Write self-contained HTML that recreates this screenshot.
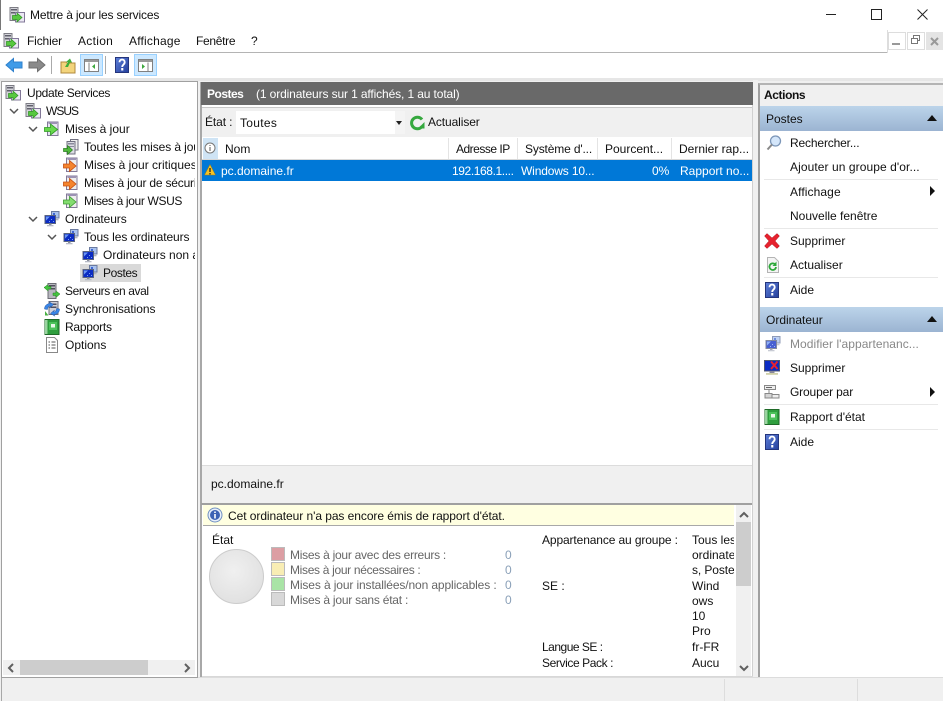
<!DOCTYPE html>
<html lang="fr"><head><meta charset="utf-8"><title>Mettre à jour les services</title>
<style>
html,body{margin:0;padding:0}
body{width:943px;height:701px;position:relative;overflow:hidden;background:#f0f0f0;font:12px/16px "Liberation Sans",sans-serif;color:#111}
.a{position:absolute}
.t{position:absolute;white-space:nowrap;line-height:16px;height:16px}
svg.i{position:absolute;width:16px;height:16px;overflow:visible}
.sep{position:absolute;left:764px;width:174px;height:1px;background:#e8e8e8}
.g{color:#666}
</style></head><body>
<svg width="0" height="0" style="position:absolute"><defs>
<linearGradient id="hb" x1="0" y1="0" x2="1" y2="1"><stop offset="0" stop-color="#5d7fd8"/><stop offset="1" stop-color="#243f9c"/></linearGradient>
<symbol id="srv" viewBox="0 0 16 16"><rect x="1" y="0.500" width="8" height="13" fill="#d4d4da" stroke="#7c7c84"/><rect x="2" y="2" width="6" height="1.500" fill="#60606c"/><rect x="2" y="5" width="6" height="1.500" fill="#60606c"/><rect x="6.500" y="5.500" width="9" height="9.500" fill="#ecE8f4" stroke="#827898"/><path d="M3.500 8.500h4.500V6l5 4.500-5 4.500v-2.500H3.500z" fill="#58c840" stroke="#2e9322" stroke-width=".7"/></symbol>
<symbol id="upg" viewBox="0 0 16 16"><path d="M3.500 1h10.500v13.500h-10.500z" fill="#e8e4f2" stroke="#827898"/><path d="M4.500 1h8.500v2h-8.500z" fill="#9c92b4"/><path d="M.5 6.500h6V3l7 5.500-7 5.500v-3.500h-6z" fill="#68d84e" stroke="#2f9a24" stroke-width=".8"/></symbol>
<symbol id="upa" viewBox="0 0 16 16"><path d="M7.500 .5h7.500v10.500h-7.500z" fill="#eee" stroke="#707080"/><path d="M4 2.500h8v12.500h-8z" fill="#dcdce4" stroke="#707080"/><path d="M5 4h6v1.500H5zM5 7h6v1H5z" fill="#8a8a9c"/><path d="M.5 9.500h4V6.500l5 4.500-5 4.500v-3h-4z" fill="#50b83c" stroke="#2a7f20" stroke-width=".7"/></symbol>
<symbol id="upr" viewBox="0 0 16 16"><path d="M3.500 1h10.500v13.500h-10.500z" fill="#eee" stroke="#827898"/><path d="M4.500 1h8.500v2h-8.500z" fill="#9c92b4"/><path d="M.5 7h6V3.500l6.500 5.500-6.500 5.500V11h-6z" fill="#f4842e" stroke="#c64e10" stroke-width=".8"/></symbol>
<symbol id="upw" viewBox="0 0 16 16"><path d="M3.500 1h10.500v13.500h-10.500z" fill="#eee" stroke="#827898"/><path d="M4.500 1h8.500v2h-8.500z" fill="#9c92b4"/><path d="M.5 7h6V3.500l6.500 5.500-6.500 5.500V11h-6z" fill="#84dc70" stroke="#3c9a30" stroke-width=".8"/></symbol>
<symbol id="pcs" viewBox="0 0 16 16"><rect x="7.500" y=".5" width="7.500" height="6.500" fill="#a9c2ee" stroke="#6a7aa0"/><rect x="9" y="2" width="2" height="2" fill="#3e66d4"/><rect x="8.500" y="8" width="6" height="1.300" fill="#b0b4c0"/><rect x="1" y="4.500" width="10.500" height="8" fill="#0b2cc4" stroke="#5a6480"/><path d="M2 5.500h4l-4 4z" fill="#6a96f2"/><path d="M7 8h1v1H7zM9 10h1v1H9zM5 10h1v1H5z" fill="#7aa0f0"/><rect x="5" y="12.500" width="2.500" height="1.500" fill="#8a8e9c"/><rect x="3" y="14" width="6.500" height="1.300" fill="#b6bac6"/></symbol>
<symbol id="down" viewBox="0 0 16 16"><rect x="4" y=".5" width="8" height="15" fill="#b8b8c0" stroke="#6c6c74"/><rect x="5" y="2" width="6" height="1.500" fill="#50505c"/><rect x="5" y="5" width="6" height="1.500" fill="#50505c"/><path d="M0 4.500 4 1.500v2h3v2.500H4v2zM16 11l-4-3v2H9v2.500h3v2z" fill="#44c440" stroke="#23801f" stroke-width=".5"/></symbol>
<symbol id="syn" viewBox="0 0 16 16"><rect x="5" y=".5" width="9" height="13" fill="#d0d0d8" stroke="#6c6c78"/><rect x="6.500" y="2.500" width="6" height="1.500" fill="#505060"/><rect x="6.500" y="5.500" width="6" height="1.500" fill="#505060"/><path d="M.5 8C.5 4.500 3 2.500 6.500 2.500L5 .8 9.500 3.500 5.500 7 6.500 5C4.500 5 3.500 6.500 3.500 8.500z" fill="#3a86e6" stroke="#1e55a8" stroke-width=".5"/><path d="M15.500 8c0 3.500-2.500 5.500-6 5.500L11 15.200 6.500 12.500l4-3.500-1 2c2 0 3-1.500 3-3.500z" fill="#3a86e6" stroke="#1e55a8" stroke-width=".5"/><path d="M1 10l3.500 4.500H1z" fill="#46b040"/></symbol>
<symbol id="rep" viewBox="0 0 16 16"><rect x="1" y=".5" width="14" height="15" fill="#2f9e3e" stroke="#1f6a28"/><rect x="1" y="1" width="2.500" height="14" fill="#9ad4a0"/><rect x="5" y="3" width="8" height="8" fill="#4cc25a"/><rect x="7" y="5" width="4" height="3.500" fill="#e8f8e8"/></symbol>
<symbol id="opt" viewBox="0 0 16 16"><path d="M2.500 .5h8l3 3v12h-11z" fill="#fff" stroke="#888"/><path d="M4.500 5H6M7.500 5h4M4.500 8H6M7.500 8h4M4.500 11H6M7.500 11h4" stroke="#555" fill="none"/></symbol>
<symbol id="help" viewBox="0 0 16 16"><rect x="1.500" y=".5" width="13" height="15" fill="url(#hb)" stroke="#24357c"/><path d="M5.500 5.200c0-3.500 5.200-3.500 5.200 0 0 2.400-2.500 2.300-2.500 4.800" fill="none" stroke="#fff" stroke-width="1.900"/><rect x="7.200" y="11" width="2.100" height="2.500" fill="#fff"/></symbol>
<symbol id="redx" viewBox="0 0 16 16"><path d="M.5 3 3 .5 8 5 13 .5 15.500 3 11 8l4.500 5-2.500 2.500L8 11l-5 4.500L.5 13 5 8z" fill="#e6222e" stroke="#b01c28" stroke-width=".5"/></symbol>
<symbol id="ref" viewBox="0 0 16 16"><path d="M2.500 .5h7l4 4v11h-11z" fill="#f4f4f4" stroke="#b4b4b4"/><path d="M11 10a3.300 3.300 0 1 1-1-2.700" fill="none" stroke="#2ea83a" stroke-width="1.800"/><path d="M11.500 4.500v4.500H7.500z" fill="#2ea83a"/></symbol>
<symbol id="find" viewBox="0 0 16 16"><circle cx="9.500" cy="6" r="5" fill="#d4e6fa" stroke="#7c96b8" stroke-width="1.300"/><path d="M6 9.500 1.500 14.500" stroke="#888" stroke-width="2"/></symbol>
<symbol id="pcx" viewBox="0 0 16 16"><rect x=".5" y=".5" width="15" height="10.500" fill="#0b2cc4" stroke="#505870"/><rect x="5.500" y="11" width="5" height="2" fill="#889"/><rect x="2" y="13" width="12" height="1.800" fill="#d0d0a8"/><path d="M7 1.500l6.500 7.500M13.500 1.500 7 9" stroke="#e8222e" stroke-width="2"/></symbol>
<symbol id="grp" viewBox="0 0 16 16"><rect x=".5" y="1.500" width="11" height="4" fill="#eee" stroke="#888"/><path d="M2 3.500h6" stroke="#666"/><path d="M5 5.500v4" stroke="#888"/><rect x="1" y="9.500" width="7" height="4.500" fill="#d4d4d4" stroke="#888"/><rect x="8" y="10.500" width="7" height="3.500" fill="#eee" stroke="#888"/></symbol>
</defs></svg>

<!-- title -->
<div class="a" style="left:0;top:0;width:943px;height:78px;background:#fff"></div>
<div class="a" style="left:0;top:0;width:1px;height:30px;background:#777"></div>
<svg class="i" style="left:9px;top:7px"><use href="#srv"/></svg>
<div class="t" style="left:30px;top:7px;letter-spacing:-.16px">Mettre à jour les services</div>
<div class="a" style="left:826px;top:14px;width:10px;height:1px;background:#222"></div>
<div class="a" style="left:871px;top:9px;width:9px;height:9px;border:1px solid #222"></div>
<svg class="a" style="left:917px;top:9px" width="11" height="11"><path d="M.5.500l10 10M10.500.500l-10 10" stroke="#222" fill="none"/></svg>

<!-- menu -->
<svg class="i" style="left:3px;top:33px"><use href="#srv"/></svg>
<div class="t" style="left:27px;top:33px;letter-spacing:-.15px">Fichier</div>
<div class="t" style="left:78px;top:33px;letter-spacing:.3px">Action</div>
<div class="t" style="left:129px;top:33px;letter-spacing:.2px">Affichage</div>
<div class="t" style="left:196px;top:33px;letter-spacing:-.3px">Fenêtre</div>
<div class="t" style="left:251px;top:33px">?</div>
<div class="a" style="left:0;top:52px;width:887px;height:1px;background:#b4b4b4"></div>
<div class="a" style="left:887px;top:30px;width:1px;height:23px;background:#ddd"></div>
<div class="a" style="left:888px;top:32px;width:16px;height:16px;border:1px solid #ddd;background:#fff"></div>
<div class="a" style="left:907px;top:32px;width:16px;height:16px;border:1px solid #ddd;background:#fff"></div>
<div class="a" style="left:926px;top:32px;width:17px;height:18px;background:#e4e4e4"></div>
<div class="a" style="left:892px;top:43px;width:8px;height:2px;background:#999"></div>
<svg class="a" style="left:911px;top:35px" width="10" height="10"><path d="M2.500 3V.5h6v5H6.500M.5 3.500h6v5h-6z" fill="none" stroke="#777"/></svg>
<svg class="a" style="left:930px;top:37px" width="9" height="9"><path d="M1 1l7 7M8 1 1 8" stroke="#999" stroke-width="2"/></svg>

<!-- toolbar -->
<svg class="a" style="left:5px;top:57px" width="18" height="16"><path d="M1 8 8.500 1.500V5H17v6H8.500v3.500z" fill="#3f9be8" stroke="#2f80cc"/></svg>
<svg class="a" style="left:28px;top:57px" width="18" height="16"><path d="M17 8 9.500 1.500V5H1v6h8.500v3.500z" fill="#8a8a8a" stroke="#707070"/></svg>
<div class="a" style="left:51px;top:56px;width:1px;height:18px;background:#aaa"></div>
<svg class="i" style="left:60px;top:58px"><path d="M1 4h5l1 1h8v10H1z" fill="#f3d47c" stroke="#b08a3c"/><path d="M5 9 8 4H6l4-3.500L12 4.500h-2L8 9z" fill="#3eae3a"/></svg>
<div class="a" style="left:80px;top:54px;width:21px;height:20px;background:#cce8ff;border:1px solid #99d1ff"></div>
<svg class="a" style="left:84px;top:59px" width="16" height="14"><rect x=".5" y=".5" width="14" height="12" fill="#fff" stroke="#808080"/><rect x="1" y="1" width="13" height="2" fill="#999"/><path d="M5 3.500v9" stroke="#808080"/><path d="M11 5v5L8 7.500z" fill="#3da83d"/></svg>
<div class="a" style="left:105px;top:56px;width:1px;height:18px;background:#aaa"></div>
<svg class="i" style="left:114px;top:57px"><use href="#help"/></svg>
<div class="a" style="left:134px;top:54px;width:21px;height:20px;background:#cce8ff;border:1px solid #99d1ff"></div>
<svg class="a" style="left:138px;top:59px" width="16" height="14"><rect x=".5" y=".5" width="14" height="12" fill="#fff" stroke="#808080"/><rect x="1" y="1" width="13" height="2" fill="#999"/><path d="M10 3.500v9" stroke="#808080"/><path d="M4 5v5l3-2.500z" fill="#3da83d"/></svg>

<div class="a" style="left:0;top:78px;width:943px;height:3px;background:#e6e6e6"></div>

<!-- left pane -->
<div class="a" style="left:1px;top:81px;width:195px;height:595px;background:#fff;border:1px solid #a0a0a0"></div>
<svg class="i" style="left:5px;top:85px"><use href="#srv"/></svg><div class="t" style="left:27px;top:85px;letter-spacing:-.33px">Update Services</div>
<svg class="a" style="left:9px;top:108px" width="10" height="7"><path d="M1 1l4 4 4-4" fill="none" stroke="#555" stroke-width="1.500"/></svg>
<svg class="i" style="left:25px;top:103px"><use href="#srv"/></svg><div class="t" style="left:46px;top:103px;letter-spacing:-1px">WSUS</div>
<svg class="a" style="left:28px;top:126px" width="10" height="7"><path d="M1 1l4 4 4-4" fill="none" stroke="#555" stroke-width="1.500"/></svg>
<svg class="i" style="left:44px;top:121px"><use href="#upg"/></svg><div class="t" style="left:65px;top:121px">Mises à jour</div>
<svg class="i" style="left:63px;top:139px"><use href="#upa"/></svg><div class="t" style="left:84px;top:139px;width:111px;overflow:hidden;letter-spacing:-.1px">Toutes les mises à jour</div>
<svg class="i" style="left:63px;top:157px"><use href="#upr"/></svg><div class="t" style="left:84px;top:157px;width:111px;overflow:hidden">Mises à jour critiques</div>
<svg class="i" style="left:63px;top:175px"><use href="#upr"/></svg><div class="t" style="left:84px;top:175px;width:111px;overflow:hidden;letter-spacing:-.2px">Mises à jour de sécurité</div>
<svg class="i" style="left:63px;top:193px"><use href="#upw"/></svg><div class="t" style="left:84px;top:193px;letter-spacing:-.35px">Mises à jour WSUS</div>
<svg class="a" style="left:28px;top:216px" width="10" height="7"><path d="M1 1l4 4 4-4" fill="none" stroke="#555" stroke-width="1.500"/></svg>
<svg class="i" style="left:44px;top:211px"><use href="#pcs"/></svg><div class="t" style="left:65px;top:211px;letter-spacing:-.1px">Ordinateurs</div>
<svg class="a" style="left:47px;top:234px" width="10" height="7"><path d="M1 1l4 4 4-4" fill="none" stroke="#555" stroke-width="1.500"/></svg>
<svg class="i" style="left:63px;top:229px"><use href="#pcs"/></svg><div class="t" style="left:84px;top:229px;letter-spacing:-.1px">Tous les ordinateurs</div>
<svg class="i" style="left:82px;top:247px"><use href="#pcs"/></svg><div class="t" style="left:103px;top:247px;width:92px;overflow:hidden">Ordinateurs non attribués</div>
<div class="a" style="left:80px;top:264px;width:61px;height:18px;background:#d9d9d9"></div>
<svg class="i" style="left:82px;top:265px"><use href="#pcs"/></svg><div class="t" style="left:103px;top:265px;letter-spacing:-.4px">Postes</div>
<svg class="i" style="left:44px;top:283px"><use href="#down"/></svg><div class="t" style="left:65px;top:283px;letter-spacing:-.4px">Serveurs en aval</div>
<svg class="i" style="left:44px;top:301px"><use href="#syn"/></svg><div class="t" style="left:65px;top:301px;letter-spacing:-.06px">Synchronisations</div>
<svg class="i" style="left:44px;top:319px"><use href="#rep"/></svg><div class="t" style="left:65px;top:319px;letter-spacing:-.25px">Rapports</div>
<svg class="i" style="left:44px;top:337px"><use href="#opt"/></svg><div class="t" style="left:65px;top:337px">Options</div>
<div class="a" style="left:3px;top:660px;width:192px;height:15px;background:#f0f0f0"></div>
<div class="a" style="left:20px;top:660px;width:128px;height:15px;background:#cdcdcd"></div>
<svg class="a" style="left:7px;top:663px" width="8" height="10"><path d="M6 1 2 5l4 4" fill="none" stroke="#606060" stroke-width="2"/></svg>
<svg class="a" style="left:183px;top:663px" width="8" height="10"><path d="M2 1l4 4-4 4" fill="none" stroke="#606060" stroke-width="2"/></svg>

<!-- center pane -->
<div class="a" style="left:200px;top:82px;width:553px;height:595px;background:#fff;border-left:2px solid #a8a8a8;box-sizing:border-box"></div>
<div class="a" style="left:201px;top:82px;width:552px;height:23px;background:#696969"></div>
<div class="t" style="left:207px;top:86px;color:#fff;font-weight:bold;letter-spacing:-.5px">Postes</div>
<div class="t" style="left:256px;top:86px;color:#fff;letter-spacing:-.12px">(1 ordinateurs sur 1 affichés, 1 au total)</div>
<div class="a" style="left:202px;top:107px;width:551px;height:30px;background:#f0f0f0;border-top:1px solid #c8c8c8;box-sizing:border-box"></div>
<div class="t" style="left:205px;top:114px;letter-spacing:-.1px">État :</div>
<div class="a" style="left:236px;top:111px;width:169px;height:23px;background:#fff"></div>
<div class="a" style="left:395px;top:111px;width:10px;height:23px;background:#f4f4f4"></div>
<div class="t" style="left:240px;top:115px;letter-spacing:.3px">Toutes</div>
<div class="a" style="left:396px;top:121px;border:3px solid transparent;border-top:4px solid #222"></div>
<svg class="i" style="left:409px;top:115px"><path d="M13 11.500A5.800 5.800 0 1 1 13 4.500" fill="none" stroke="#35a83e" stroke-width="3"/><path d="M15.500 7v6.500H9z" fill="#35a83e"/></svg>
<div class="t" style="left:428px;top:114px;letter-spacing:-.1px">Actualiser</div>

<div class="a" style="left:202px;top:138px;width:551px;height:22px;background:#fff;border-bottom:1px solid #d8d8d8;box-sizing:border-box"></div>
<div class="a" style="left:203px;top:138px;width:15px;height:21px;background:#cfe4f5"></div>
<svg class="a" style="left:204px;top:142px" width="12" height="12"><circle cx="6" cy="6" r="5" fill="#fff" stroke="#777"/><path d="M6 3v1M6 5v4" stroke="#555"/></svg>
<div class="t" style="left:225px;top:141px">Nom</div>
<div class="a" style="left:448px;top:138px;width:1px;height:21px;background:#e4e4e4"></div>
<div class="t" style="left:456px;top:141px;letter-spacing:-.5px">Adresse IP</div>
<div class="a" style="left:517px;top:138px;width:1px;height:21px;background:#e4e4e4"></div>
<div class="t" style="left:525px;top:141px;letter-spacing:-.15px">Système d'...</div>
<div class="a" style="left:597px;top:138px;width:1px;height:21px;background:#e4e4e4"></div>
<div class="t" style="left:605px;top:141px">Pourcent...</div>
<div class="a" style="left:671px;top:138px;width:1px;height:21px;background:#e4e4e4"></div>
<div class="t" style="left:679px;top:141px">Dernier rap...</div>

<div class="a" style="left:202px;top:160px;width:550px;height:21px;background:#0078d7"></div>
<svg class="a" style="left:204px;top:164px" width="12" height="12"><path d="M6 .5 11.500 11H.5z" fill="#f6c324" stroke="#a07a10" stroke-width=".5"/><path d="M6 4v4M6 9v1.500" stroke="#222" stroke-width="1.300"/></svg>
<div class="t" style="left:221px;top:163px;color:#fff">pc.domaine.fr</div>
<div class="t" style="left:452px;top:163px;color:#fff;letter-spacing:-.4px">192.168.1....</div>
<div class="t" style="left:521px;top:163px;color:#fff;letter-spacing:-.15px">Windows 10...</div>
<div class="t" style="left:652px;top:163px;color:#fff">0%</div>
<div class="t" style="left:680px;top:163px;color:#fff">Rapport no...</div>

<div class="a" style="left:202px;top:465px;width:551px;height:38px;background:#f0f0f0;border-top:1px solid #dcdcdc;box-sizing:border-box"></div>
<div class="t" style="left:211px;top:476px">pc.domaine.fr</div>
<div class="a" style="left:201px;top:503px;width:552px;height:2px;background:#a0a0a0"></div>
<div class="a" style="left:203px;top:505px;width:531px;height:20px;background:#ffffe1;border-bottom:1px solid #a8a8a8"></div>
<svg class="a" style="left:207px;top:507px" width="16" height="16"><circle cx="8" cy="8" r="7" fill="#e8f0fb" stroke="#6f8fc0"/><circle cx="8" cy="8" r="5" fill="#3c62b4"/><path d="M8 4.500v1.500M8 7v4.500" stroke="#fff" stroke-width="1.600"/></svg>
<div class="t" style="left:228px;top:508px;letter-spacing:-.06px">Cet ordinateur n'a pas encore émis de rapport d'état.</div>
<div class="t" style="left:212px;top:532px">État</div>
<div class="a" style="left:209px;top:549px;width:55px;height:55px;border-radius:50%;background:radial-gradient(circle at 45% 40%,#f0f0f0,#e2e2e2 70%,#d4d4d4);border:1px solid #ccc;box-sizing:border-box"></div>
<div class="a" style="left:271px;top:547px;width:12px;height:12px;background:#dc9ea3;border:.5px solid #bbb"></div>
<div class="a" style="left:271px;top:562px;width:12px;height:12px;background:#f8edb4;border:.5px solid #bbb"></div>
<div class="a" style="left:271px;top:577px;width:12px;height:12px;background:#a9e4a6;border:.5px solid #bbb"></div>
<div class="a" style="left:271px;top:592px;width:12px;height:12px;background:#d8d8d8;border:.5px solid #bbb"></div>
<div class="t g" style="left:290px;top:547px;letter-spacing:-.26px">Mises à jour avec des erreurs :</div>
<div class="t g" style="left:290px;top:562px;letter-spacing:-.32px">Mises à jour nécessaires :</div>
<div class="t g" style="left:290px;top:577px;letter-spacing:-.12px">Mises à jour installées/non applicables :</div>
<div class="t g" style="left:290px;top:592px;letter-spacing:-.22px">Mises à jour sans état :</div>
<div class="t" style="left:505px;top:547px;color:#8aa0b8">0</div>
<div class="t" style="left:505px;top:562px;color:#8aa0b8">0</div>
<div class="t" style="left:505px;top:577px;color:#8aa0b8">0</div>
<div class="t" style="left:505px;top:592px;color:#8aa0b8">0</div>
<div class="t" style="left:542px;top:532px;letter-spacing:-.12px">Appartenance au groupe :</div>
<div class="t" style="left:692px;top:532px;width:42px;overflow:hidden">Tous les</div>
<div class="t" style="left:692px;top:547px;width:42px;overflow:hidden">ordinateur</div>
<div class="t" style="left:692px;top:562px;width:42px;overflow:hidden;letter-spacing:-.1px">s, Postes</div>
<div class="t" style="left:542px;top:578px">SE :</div>
<div class="t" style="left:692px;top:578px">Wind</div>
<div class="t" style="left:692px;top:593px">ows</div>
<div class="t" style="left:692px;top:608px">10</div>
<div class="t" style="left:692px;top:623px">Pro</div>
<div class="t" style="left:542px;top:639px;letter-spacing:-.5px">Langue SE :</div>
<div class="t" style="left:692px;top:639px">fr-FR</div>
<div class="t" style="left:542px;top:655px;letter-spacing:-.4px">Service Pack :</div>
<div class="t" style="left:692px;top:655px">Aucu</div>
<div class="a" style="left:736px;top:505px;width:15px;height:171px;background:#f0f0f0"></div>
<div class="a" style="left:736px;top:522px;width:15px;height:64px;background:#cdcdcd"></div>
<svg class="a" style="left:739px;top:511px" width="10" height="8"><path d="M1 6l4-4 4 4" fill="none" stroke="#606060" stroke-width="2"/></svg>
<svg class="a" style="left:739px;top:664px" width="10" height="8"><path d="M1 2l4 4 4-4" fill="none" stroke="#606060" stroke-width="2"/></svg>
<div class="a" style="left:752px;top:105px;width:1px;height:571px;background:#d0d0d0"></div>
<div class="a" style="left:753px;top:80px;width:5px;height:597px;background:#f0f0f0"></div>
<div class="a" style="left:202px;top:676px;width:551px;height:1px;background:#d8d8d8"></div>

<!-- actions pane -->
<div class="a" style="left:758px;top:83px;width:185px;height:594px;background:#fff;border-left:2px solid #a0a0a0;border-top:2px solid #b4b4b4;box-sizing:border-box"></div>
<div class="a" style="left:760px;top:85px;width:183px;height:21px;background:#f0f0f0"></div>
<div class="t" style="left:764px;top:87px;font-weight:bold;letter-spacing:-.4px">Actions</div>
<div class="a" style="left:760px;top:106px;width:183px;height:25px;background:linear-gradient(#bcd4ea,#9bb4d2)"></div>
<div class="t" style="left:766px;top:111px">Postes</div>
<div class="a" style="left:927px;top:115px;border:5px solid transparent;border-top:0;border-bottom:6px solid #111"></div>
<svg class="i" style="left:766px;top:135px"><use href="#find"/></svg><div class="t" style="left:790px;top:135px;letter-spacing:-.15px">Rechercher...</div>
<div class="t" style="left:790px;top:159px;letter-spacing:.08px">Ajouter un groupe d'or...</div>
<div class="sep" style="top:179px"></div>
<div class="t" style="left:790px;top:184px;letter-spacing:.1px">Affichage</div>
<div class="a" style="left:930px;top:186px;border:5px solid transparent;border-right:0;border-left:5px solid #111"></div>
<div class="t" style="left:790px;top:208px">Nouvelle fenêtre</div>
<div class="sep" style="top:228px"></div>
<svg class="i" style="left:764px;top:233px"><use href="#redx"/></svg><div class="t" style="left:790px;top:233px">Supprimer</div>
<svg class="i" style="left:765px;top:257px"><use href="#ref"/></svg><div class="t" style="left:790px;top:257px">Actualiser</div>
<div class="sep" style="top:277px"></div>
<svg class="i" style="left:764px;top:282px"><use href="#help"/></svg><div class="t" style="left:790px;top:282px">Aide</div>
<div class="a" style="left:760px;top:307px;width:183px;height:25px;background:linear-gradient(#bcd4ea,#9bb4d2)"></div>
<div class="t" style="left:766px;top:312px">Ordinateur</div>
<div class="a" style="left:927px;top:316px;border:5px solid transparent;border-top:0;border-bottom:6px solid #111"></div>
<svg class="i" style="left:765px;top:336px;opacity:.75"><use href="#pcs"/></svg><div class="t" style="left:790px;top:336px;color:#888;letter-spacing:.05px">Modifier l'appartenanc...</div>
<svg class="i" style="left:764px;top:360px"><use href="#pcx"/></svg><div class="t" style="left:790px;top:360px">Supprimer</div>
<svg class="i" style="left:764px;top:384px"><use href="#grp"/></svg><div class="t" style="left:790px;top:384px;letter-spacing:-.15px">Grouper par</div>
<div class="a" style="left:930px;top:387px;border:5px solid transparent;border-right:0;border-left:5px solid #111"></div>
<div class="sep" style="top:404px"></div>
<svg class="i" style="left:764px;top:409px"><use href="#rep"/></svg><div class="t" style="left:790px;top:409px">Rapport d'état</div>
<div class="sep" style="top:429px"></div>
<svg class="i" style="left:764px;top:434px"><use href="#help"/></svg><div class="t" style="left:790px;top:434px">Aide</div>

<!-- status -->
<div class="a" style="left:198px;top:677px;width:745px;height:1px;background:#dcdcdc"></div>
<div class="a" style="left:0;top:678px;width:943px;height:23px;background:#f0f0f0"></div>
<div class="a" style="left:1px;top:678px;width:1px;height:23px;background:#a8a8a8"></div>
<div class="a" style="left:724px;top:679px;width:1px;height:22px;background:#ddd"></div>
<div class="a" style="left:857px;top:679px;width:1px;height:22px;background:#ddd"></div>
</body></html>
